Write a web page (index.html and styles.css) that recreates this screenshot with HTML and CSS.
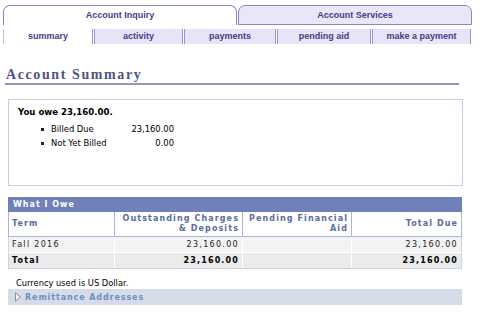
FILE: index.html
```html
<!DOCTYPE html>
<html>
<head>
<meta charset="utf-8">
<link rel="stylesheet" href="styles.css">
</head>
<body>
<div class="tabs-top">
  <div class="tab-main active">Account Inquiry</div>
  <div class="tab-main">Account Services</div>
</div>
<div class="tabs-sub">
  <div class="subtab active">summary</div>
  <div class="subtab w-activity">activity</div>
  <div class="subtab w-payments">payments</div>
  <div class="subtab w-pending">pending aid</div>
  <div class="subtab last">make a payment</div>
</div>

<h1 class="page-title">Account Summary</h1>

<div class="summary-box">
  <div class="owe-line">You owe 23,160.00.</div>
  <ul class="owe-list">
    <li><span class="bullet"></span><span class="label">Billed Due</span><span class="amount">23,160.00</span></li>
    <li><span class="bullet"></span><span class="label">Not Yet Billed</span><span class="amount">0.00</span></li>
  </ul>
</div>

<table class="owe-table">
  <tr class="title-row"><th colspan="4">What I Owe</th></tr>
  <tr class="head-row">
    <th class="c-term">Term</th>
    <th class="c-out">Outstanding Charges &amp; Deposits</th>
    <th class="c-pend">Pending Financial Aid</th>
    <th class="c-tot">Total Due</th>
  </tr>
  <tr class="data-row">
    <td class="c-term">Fall 2016</td>
    <td class="num">23,160.00</td>
    <td class="num"></td>
    <td class="num">23,160.00</td>
  </tr>
  <tr class="total-row">
    <td class="c-term">Total</td>
    <td class="num">23,160.00</td>
    <td class="num"></td>
    <td class="num">23,160.00</td>
  </tr>
</table>

<p class="currency">Currency used is US Dollar.</p>

<div class="remit">
  <svg class="tri" width="6" height="10" viewBox="0 0 6 10"><path d="M0.5 0.8 L5.3 5 L0.5 9.2 Z" fill="#fff" stroke="#8a8a8a" stroke-width="1"/></svg>
  <span>Remittance Addresses</span>
</div>
</body>
</html>
```

FILE: styles.css
```css
body {
  margin: 0;
  background: #fff;
  font-family: "DejaVu Sans", Verdana, sans-serif;
  color: #000;
}

.tabs-top {
  display: flex;
  gap: 1px;
  margin: 5px 0 0 3px;
  width: 470px;
}
.tab-main {
  box-sizing: border-box;
  width: 234px;
  height: 19.5px;
  border: 1px solid #8c84c6;
  border-radius: 7px 7px 0 0;
  background: #e8e6f7;
  font-family: "Liberation Sans", Arial, sans-serif;
  font-weight: bold;
  font-size: 9px;
  color: #483a8a;
  text-align: center;
  line-height: 18px;
}
.tab-main.active {
  background: #fff;
  border-bottom: none;
  height: 20px;
  line-height: 19px;
}

.tabs-sub {
  display: flex;
  margin: 4px 0 0 3px;
  width: 470px;
  height: 15px;
}
.subtab {
  box-sizing: border-box;
  background: #e6e4f7;
  border-left: 1px solid #9b93cf;
  box-shadow: inset 1px 0 #fff, inset 2px 0 #9b93cf;
  padding-left: 2px;
  font-family: "Liberation Sans", Arial, sans-serif;
  font-weight: bold;
  font-size: 9px;
  color: #483a8a;
  text-align: center;
  line-height: 15px;
}
.subtab.active {
  width: 89px;
  background: #fff;
  border-left: 1px solid #c4bee6;
  box-shadow: none;
  padding-left: 0;
}
.subtab.w-activity { width: 90px; }
.subtab.w-payments { width: 93px; }
.subtab.w-pending { width: 95px; }
.subtab.last {
  width: 101px;
  border-right: 1px solid #9b93cf;
}

.page-title {
  margin: 22px 0 0 5px;
  width: 453px;
  padding-left: 1px;
  font-family: "Liberation Serif", "Times New Roman", serif;
  font-size: 14px;
  font-weight: bold;
  letter-spacing: 1.6px;
  line-height: 17px;
  color: #4f5280;
  border-bottom: 2px solid #9298b7;
}

.summary-box {
  box-sizing: border-box;
  margin: 14px 0 0 8px;
  width: 455px;
  height: 87px;
  border: 1px solid #c9cee2;
  padding: 6px 0 0 9px;
}
.owe-line {
  font-size: 8.6px;
  font-weight: bold;
  line-height: 12px;
}
.owe-list {
  list-style: none;
  margin: 4px 0 0;
  padding: 0;
  font-size: 8.4px;
}
.owe-list li {
  display: flex;
  align-items: center;
  height: 14px;
}
.bullet {
  width: 3px;
  height: 3px;
  background: #222;
  margin-left: 23px;
  margin-right: 7px;
}
.label {
  width: 70px;
}
.amount {
  width: 53px;
  text-align: right;
}

.owe-table {
  margin: 11px 0 0 8px;
  width: 454px;
  border-collapse: collapse;
  border: 1px solid #cdd2e2;
  font-size: 8px;
  letter-spacing: 1.3px;
  color: #222;
}
.owe-table th,
.owe-table td {
  padding: 0 3px;
}
.title-row th {
  background: #7080b8;
  color: #fff;
  text-align: left;
  font-weight: bold;
  letter-spacing: 1px;
  height: 13px;
  padding: 0 4px;
  border: 1px solid #7080b8;
}
.head-row th {
  height: 24px;
  border: 1px solid #a9b5da;
  background: #fff;
  color: #596c9b;
  font-weight: bold;
  letter-spacing: 1.1px;
  text-align: right;
  line-height: 10px;
  vertical-align: middle;
  padding: 0 3px 0 3px;
}
.head-row th.c-term {
  text-align: left;
}
.c-term { width: 99px; }
.c-out { width: 121px; }
.c-pend { width: 102px; }
.data-row td,
.total-row td {
  height: 15px;
  border: 1px solid #fff;
  border-top: none;
  text-align: right;
}
.data-row td { background: #f3f3f3; }
.total-row td {
  background: #ebebeb;
  font-weight: bold;
  letter-spacing: 1.15px;
  color: #000;
}
.data-row td.c-term,
.total-row td.c-term { text-align: left; }
.data-row td:first-child,
.total-row td:first-child { border-left-color: #cdd2e2; }
.data-row td:last-child,
.total-row td:last-child { border-right-color: #cdd2e2; }
.total-row td { border-bottom-color: #cdd2e2; }

.currency {
  margin: 8px 0 0 16px;
  font-size: 8.3px;
  line-height: 12px;
}
.remit {
  box-sizing: border-box;
  display: flex;
  align-items: center;
  gap: 4px;
  margin: 0 0 0 8px;
  width: 454px;
  height: 16px;
  padding-left: 7px;
  background: #d5dce8;
  font-size: 8px;
  font-weight: bold;
  letter-spacing: 0.9px;
  color: #6e8ebf;
}
.tri { display: block; }
```
